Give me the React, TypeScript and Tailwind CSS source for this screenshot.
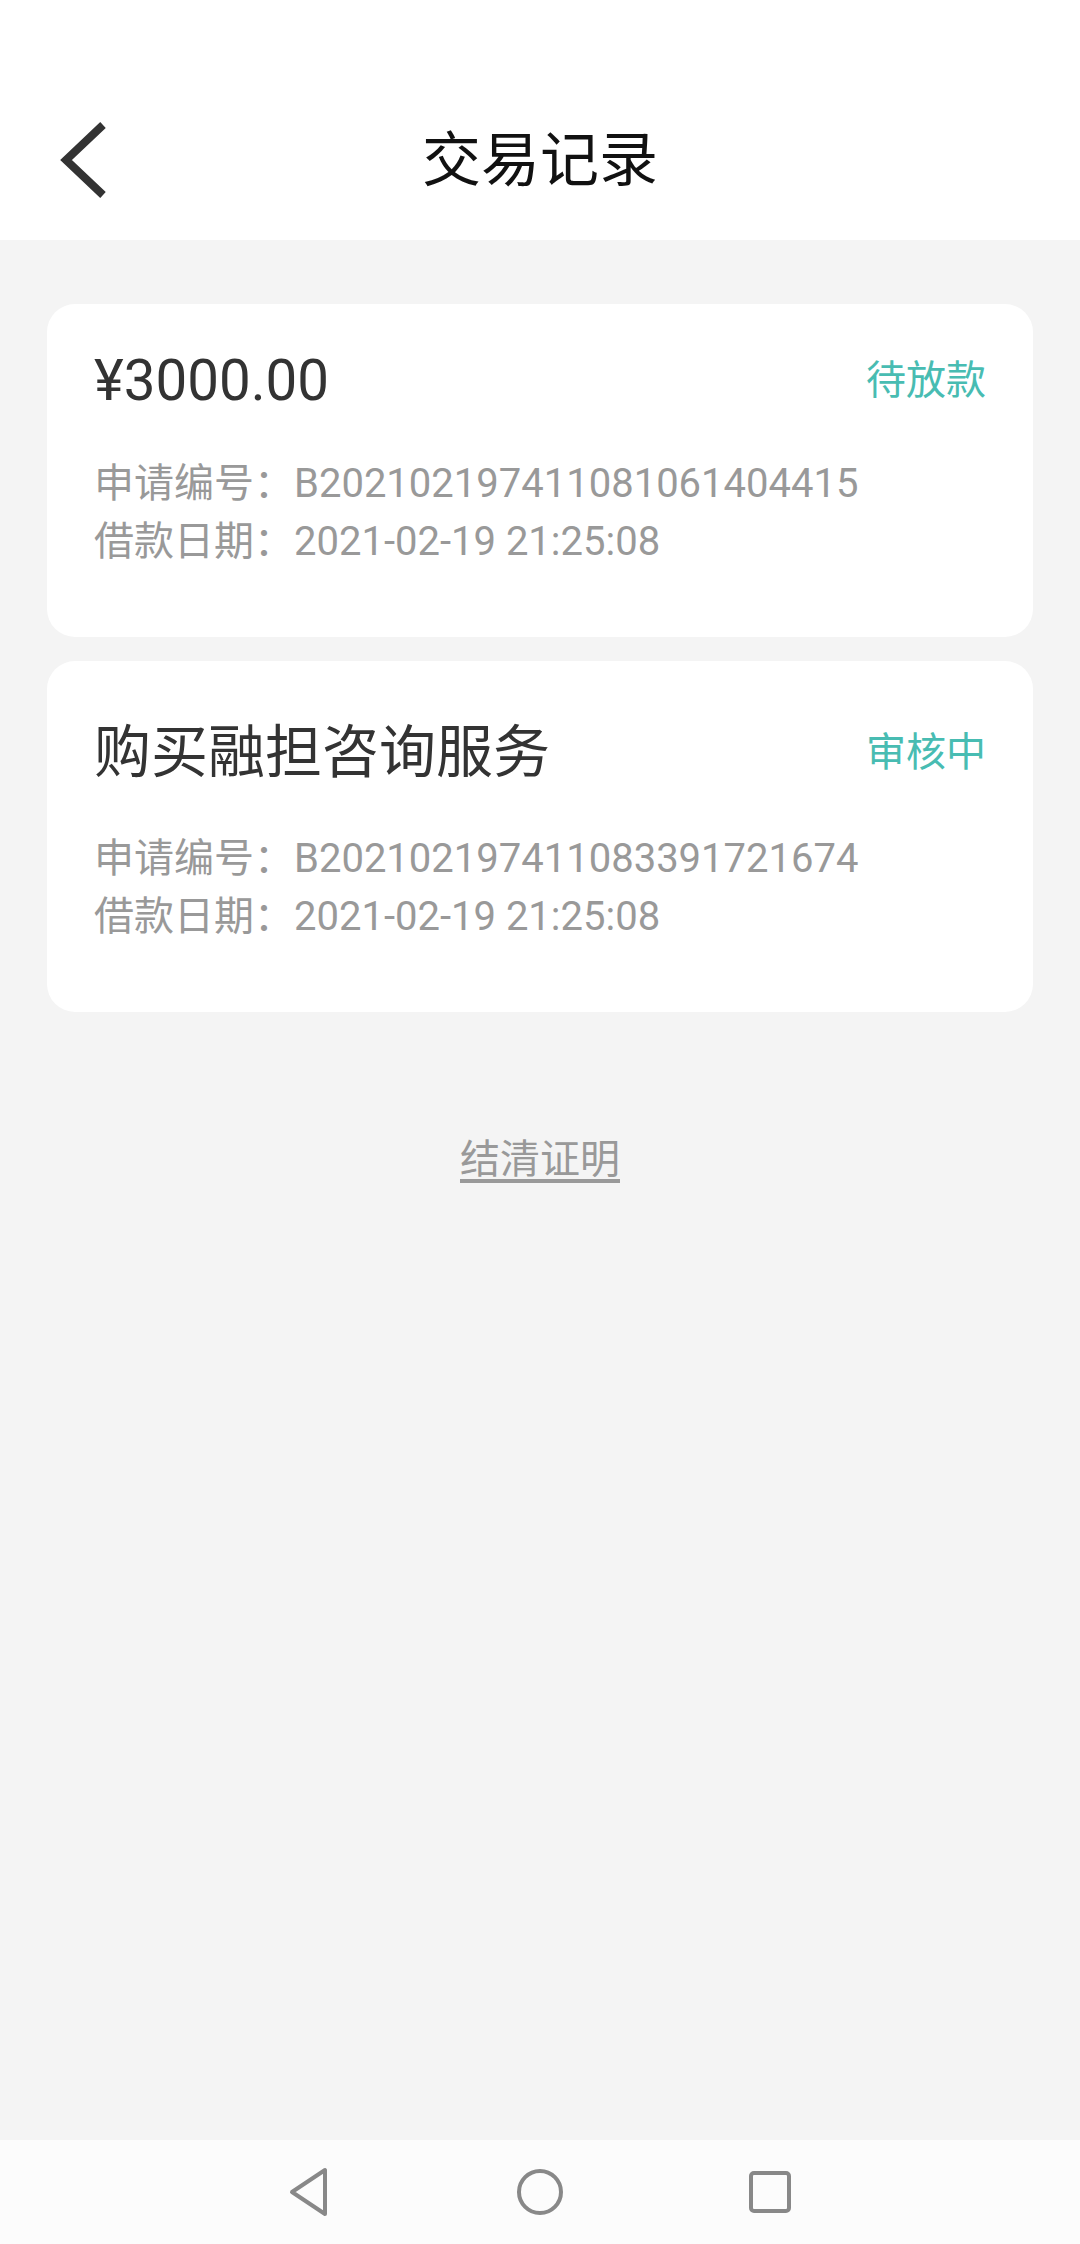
import React from 'react';

const font = { fontFamily: 'Roboto, "Noto Sans CJK SC", sans-serif' };

type Record = {
    title: string;
    status: string;
    applyNo: string;
    date: string;
    cjkTitle?: boolean;
};

const records: Record[] = [
    {
        title: '¥3000.00',
        status: '待放款',
        applyNo: 'B202102197411081061404415',
        date: '2021-02-19 21:25:08',
    },
    {
        title: '购买融担咨询服务',
        status: '审核中',
        applyNo: 'B202102197411083391721674',
        date: '2021-02-19 21:25:08',
        cjkTitle: true,
    },
];

const RecordCard: React.FC<{ record: Record }> = ({ record }) => {
    return (
        <div
            className={`bg-white rounded-[28px] px-[47px] ${
                record.cjkTitle ? 'pt-[64px] pb-[66px]' : 'pt-[49px] pb-[66px]'
            }`}
        >
            <div className="flex items-center justify-between h-[56px]">
                <span
                    className={`${record.cjkTitle ? 'text-[57px]' : 'text-[56.5px]'} leading-[56px] text-[#333333]`}
                >
                    {record.title}
                </span>
                <span className="text-[40px] leading-[56px] text-[#48bcb2]">{record.status}</span>
            </div>
            <div className={`${record.cjkTitle ? 'mt-[49px]' : 'mt-[46px]'} text-[40px] leading-[58px] text-[#999999]`}>
                <div>申请编号：{record.applyNo}</div>
                <div>借款日期：{record.date}</div>
            </div>
        </div>
    );
};

export default function App() {
    return (
        <div className="w-[1080px] h-[2244px] bg-[#f4f4f4] flex flex-col" style={font}>
            <header className="bg-white h-[240px] pt-[80px]">
                <div className="h-[160px] grid grid-cols-[1fr_auto_1fr] items-center">
                    <button className="pl-[58px] flex items-center">
                        <svg width="50" height="76" viewBox="0 0 50 76" fill="none">
                            <path d="M45 3 L8 38 L45 73" stroke="#333333" strokeWidth="8" />
                        </svg>
                    </button>
                    <h1 className="text-[59px] leading-none text-[#111111]">交易记录</h1>
                    <div />
                </div>
            </header>

            <main className="flex-1 px-[47px] pt-[64px] flex flex-col gap-[24px]">
                {records.map((r) => (
                    <RecordCard key={r.applyNo} record={r} />
                ))}
                <div className="mt-[100px] flex justify-center">
                    <a className="text-[40px] leading-[48px] text-[#999999] underline underline-offset-[6px]">结清证明</a>
                </div>
            </main>

            <nav className="h-[104px] bg-[#fcfcfc] flex items-center justify-center gap-[183px]">
                <svg width="44" height="50" viewBox="0 0 44 50" fill="none">
                    <path
                        d="M37 3 L37 47 L4 25 Z"
                        stroke="#888888"
                        strokeWidth="4"
                        strokeLinejoin="round"
                    />
                </svg>
                <svg width="50" height="50" viewBox="0 0 50 50" fill="none">
                    <circle cx="25" cy="25" r="21" stroke="#888888" strokeWidth="4" />
                </svg>
                <svg width="44" height="44" viewBox="0 0 44 44" fill="none">
                    <rect x="3" y="3" width="38" height="38" rx="3" stroke="#888888" strokeWidth="4" />
                </svg>
            </nav>
        </div>
    );
}
